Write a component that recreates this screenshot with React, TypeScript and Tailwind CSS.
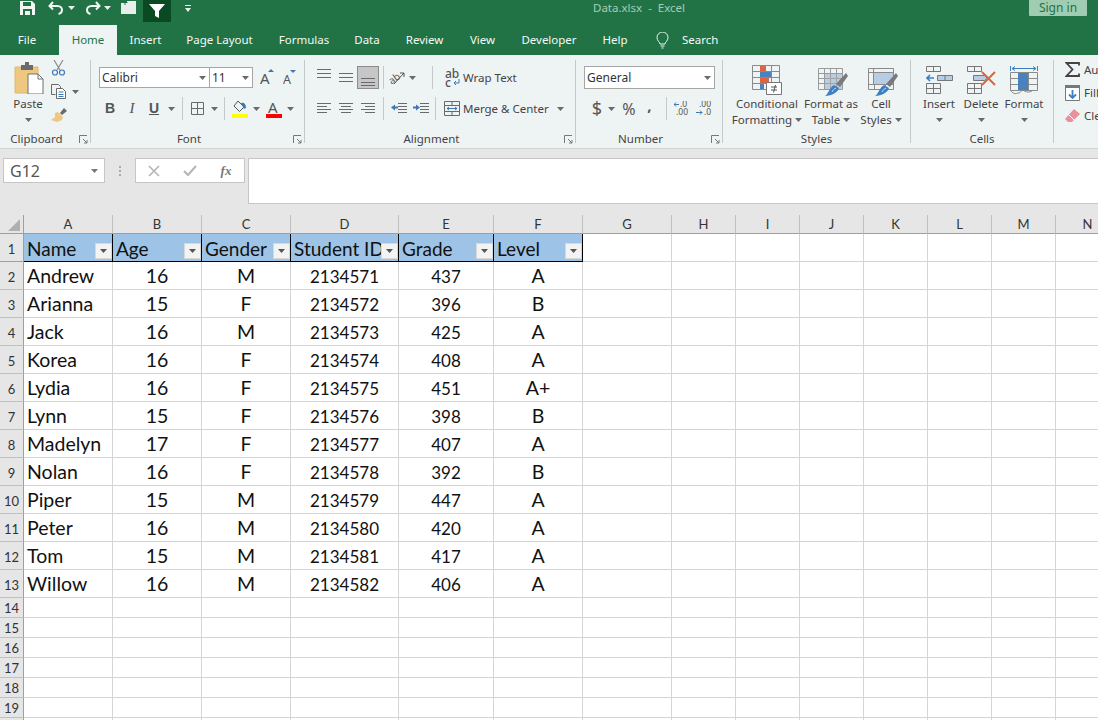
import type { ReactNode } from "react";

const ui = "font-['Noto_Sans',sans-serif]";
const G = "#6a6a6a";

const rows = [
  ["Andrew", "16", "M", "2134571", "437", "A"],
  ["Arianna", "15", "F", "2134572", "396", "B"],
  ["Jack", "16", "M", "2134573", "425", "A"],
  ["Korea", "16", "F", "2134574", "408", "A"],
  ["Lydia", "16", "F", "2134575", "451", "A+"],
  ["Lynn", "15", "F", "2134576", "398", "B"],
  ["Madelyn", "17", "F", "2134577", "407", "A"],
  ["Nolan", "16", "F", "2134578", "392", "B"],
  ["Piper", "15", "M", "2134579", "447", "A"],
  ["Peter", "16", "M", "2134580", "420", "A"],
  ["Tom", "15", "M", "2134581", "417", "A"],
  ["Willow", "16", "M", "2134582", "406", "A"],
];
const headers = ["Name", "Age", "Gender", "Student ID", "Grade", "Level"];
const columns = ["A", "B", "C", "D", "E", "F", "G", "H", "I", "J", "K", "L", "M", "N"];
const gridCols =
  "grid grid-cols-[24px_89px_89px_89px_108px_95px_89px_89px_64px_64px_64px_64px_64px_64px_64px]";

const Caret = ({ color = G }: { color?: string }) => (
  <svg width="7" height="4" viewBox="0 0 7 4" className="shrink-0">
    <path d="M0 0h7L3.500 4z" fill={color} />
  </svg>
);

const Ico = ({ w, h, children }: { w: number; h: number; children: ReactNode }) => (
  <svg width={w} height={h} viewBox={`0 0 ${w} ${h}`} className="shrink-0" fill="none">
    {children}
  </svg>
);

const Lines = ({ ys, xs }: { ys: number[]; xs: [number, number][] }) => (
  <>
    {ys.map((y, i) => (
      <path key={y} d={`M${xs[i % xs.length][0]} ${y + 0.5}H${xs[i % xs.length][1]}`} stroke={G} />
    ))}
  </>
);

const Launcher = () => (
  <div className="w-[11px] shrink-0">
    <svg width="9" height="9" viewBox="0 0 9 9" fill="none">
      <path d="M.5 8V.5H8M4 4l4 4M8 5v3H5" stroke="#777" />
    </svg>
  </div>
);

const Group = ({
  width,
  label,
  launcher,
  children,
}: {
  width: string;
  label: string;
  launcher?: boolean;
  children: ReactNode;
}) => (
  <div className={`${width} h-[83px] shrink-0 flex flex-col border-r border-[#c6c9c9]`}>
    <div className="h-[72px] shrink-0">{children}</div>
    <div className="h-[14px] shrink-0 flex items-center">
      <div className={`flex-1 text-center text-[11.5px] leading-none text-[#444] ${launcher ? "pr-[6px]" : ""}`}>
        {label}
      </div>
      {launcher && <Launcher />}
    </div>
  </div>
);

const Sep = ({ className = "" }: { className?: string }) => (
  <div className={`w-px h-[23px] bg-[#c6c9c9] shrink-0 ${className}`} />
);

const Slot = ({ w, children }: { w: string; children: ReactNode }) => (
  <div className={`${w} h-full shrink-0 flex items-center justify-center`}>{children}</div>
);

const BigButton = ({
  width,
  icon,
  line1,
  line2,
}: {
  width: string;
  icon: ReactNode;
  line1: string;
  line2?: string;
}) => (
  <div className={`${width} shrink-0 flex flex-col items-center`}>
    <div className="h-[36px] mt-[2px] flex items-center justify-center">{icon}</div>
    <div className="text-[11.5px] leading-[16px] mt-[-2px] text-[#444] whitespace-nowrap">{line1}</div>
    {line2 ? (
      <div className="text-[11.5px] leading-[16px] text-[#444] whitespace-nowrap flex items-center gap-[3px]">
        {line2}
        <Caret />
      </div>
    ) : (
      <div className="h-[16px] flex items-center">
        <Caret />
      </div>
    )}
  </div>
);

const TitleBar = () => (
  <div className={`h-[25px] bg-[#217346] flex items-start relative ${ui}`}>
    <div className="w-[20px] shrink-0" />
    <Ico w={15} h={15}>
      <path d="M0 1h12l3 3v11H0z" fill="#f2f7f4" />
      <path d="M3 2h8v4H3z" fill="#217346" />
      <path d="M3 9h9v6H3z" fill="#217346" />
      <path d="M5 11h5v4H5z" fill="#f2f7f4" />
    </Ico>
    <div className="w-[13px] shrink-0" />
    <div className="mt-[1px]">
      <Ico w={16} h={14}>
        <path d="M5 1L1.500 5 5 8.500M2 5h7.500c3 0 4.500 2 4.500 4s-1.500 3.500-3.500 4" stroke="#f2f7f4" strokeWidth="2" />
      </Ico>
    </div>
    <div className="ml-[4px] mt-[6px]"><Caret color="#e8f1ec" /></div>
    <div className="w-[10px] shrink-0" />
    <div className="mt-[1px] -scale-x-100">
      <Ico w={16} h={14}>
        <path d="M5 1L1.500 5 5 8.500M2 5h7.500c3 0 4.500 2 4.500 4s-1.500 3.500-3.500 4" stroke="#f2f7f4" strokeWidth="2" />
      </Ico>
    </div>
    <div className="ml-[3px] mt-[6px]"><Caret color="#e8f1ec" /></div>
    <div className="w-[10px] shrink-0" />
    <Ico w={16} h={14}>
      <path d="M0 3h6V1h9v13H0z" fill="#e8efeb" />
      <path d="M4 0v5M1.500 2.500h5" stroke="#217346" />
    </Ico>
    <div className="w-[6px] shrink-0" />
    <div className="w-[28px] h-[22px] bg-[#0a4a22] flex items-center justify-center shrink-0">
      <Ico w={16} h={16}>
        <path d="M0 1h16l-6 7v7l-4-2V8z" fill="#fff" />
      </Ico>
    </div>
    <div className="w-[14px] shrink-0" />
    <svg width="6" height="7" viewBox="0 0 6 7" className="mt-[5px] shrink-0">
      <path d="M0 0h6v1H0zM0 3h6L3 7z" fill="#e8f1ec" />
    </svg>
    <div className="absolute left-[593px] top-0 text-[11.5px] leading-[16px] text-[#a8cbb7] whitespace-pre">
      Data.xlsx  -  Excel
    </div>
    <div className="absolute left-[1029px] top-0 w-[58px] h-[16px] bg-[#a0cdb2] rounded-b-[1px] text-center text-[12px] leading-[15px] text-[#217346]">
      Sign in
    </div>
  </div>
);

const tabs: [string, string][] = [
  ["Insert", "w-[57px]"],
  ["Page Layout", "w-[91px]"],
  ["Formulas", "w-[78px]"],
  ["Data", "w-[48px]"],
  ["Review", "w-[67px]"],
  ["View", "w-[49px]"],
  ["Developer", "w-[84px]"],
  ["Help", "w-[48px]"],
];

const TabBar = () => (
  <div className={`h-[30px] bg-[#217346] flex text-[11.5px] leading-[30px] text-[#f4f8f6] pl-[4px] ${ui}`}>
    <div className="w-[46px] mr-[9px] text-center">File</div>
    <div className="w-[58px] bg-[#eef3f3] text-[#217346] text-center">Home</div>
    {tabs.map(([t, w]) => (
      <div key={t} className={`${w} text-center whitespace-nowrap`}>
        {t}
      </div>
    ))}
    <div className="ml-[17px] mt-[7px]">
      <Ico w={13} h={17}>
        <path d="M4 12c0-2-3-3-3-6.500a5.500 5.500 0 0 1 11 0C12 9 9 10 9 12zM4.500 14h4M5.500 16h2" stroke="#f4f8f6" />
      </Ico>
    </div>
    <div className="ml-[13px]">Search</div>
  </div>
);

const ClipboardGroup = () => (
  <Group width="w-[91px]" label="Clipboard" launcher>
    <div className="flex">
      <div className="w-[51px] flex flex-col items-center pl-[5px]">
        <div className="mt-[2px] ml-[2px]">
          <Ico w={30} h={32}>
            <path d="M1 5h23v26H1z" fill="#eec780" stroke="#e0b870" />
            <path d="M7 3h4V0h4v3h4v5H7z" fill="#6b6b6b" />
            <path d="M14 12h10l5 5v15H14z" fill="#fff" stroke="#707070" />
            <path d="M24 12v5h5" stroke="#707070" />
          </Ico>
        </div>
        <div className="text-[11.5px] leading-[16px] mt-[2px] text-[#444]">Paste</div>
        <div className="mt-[6px]"><Caret /></div>
      </div>
      <div className="flex flex-col">
        <div className="h-[24px] flex items-start">
          <Ico w={15} h={16}>
            <path d="M3 0l6 10M12 0L6 10" stroke="#8a8a8a" strokeWidth="1.200" />
            <circle cx="4" cy="12.500" r="2.500" stroke="#3c78b4" strokeWidth="1.200" />
            <circle cx="11" cy="12.500" r="2.500" stroke="#3c78b4" strokeWidth="1.200" />
          </Ico>
        </div>
        <div className="h-[24px] flex items-start gap-[6px]">
          <Ico w={15} h={15}>
            <path d="M.5 .5h7l2 2v3M.5 .5v10h4" stroke={G} />
            <path d="M5.500 4.500h6l3 3v7h-9z" fill="#fff" stroke={G} />
            <path d="M7.500 8h5M7.500 10.500h5M7.500 12.500h5" stroke="#3c78b4" />
          </Ico>
          <div className="mt-[6px]"><Caret /></div>
        </div>
        <div className="h-[24px] flex items-start">
          <Ico w={16} h={15}>
            <path d="M9 5l4-5 3 3-5 4z" fill="#6a6a6a" />
            <path d="M4 5l3-1 5 5-1 3-5 2-6-2 4-3z" fill="#eec780" />
          </Ico>
        </div>
      </div>
    </div>
  </Group>
);

const FontGroup = () => (
  <Group width="w-[214px]" label="Font" launcher>
    <div className="pl-[8px] pt-[7px]">
      <div className="h-[21px] flex items-stretch">
        <div className="w-[111px] border border-[#a6a6a6] bg-white flex items-center justify-between pl-[2px] pr-[3px] text-[12px] text-[#333]">
          Calibri
          <Caret />
        </div>
        <div className="w-[43px] border border-l-0 border-[#a6a6a6] bg-white flex items-center justify-between pl-[2px] pr-[3px] text-[12px] text-[#333]">
          11
          <Caret />
        </div>
        <div className="w-[7px]" />
        <Ico w={14} h={21}>
          <text x="0" y="17" fontSize="15" fill="#555" fontFamily="Noto Sans">A</text>
          <path d="M8 5h6l-3-3z" fill="#3c78b4" />
        </Ico>
        <div className="w-[9px]" />
        <Ico w={14} h={21}>
          <text x="0" y="17" fontSize="12.500" fill="#555" fontFamily="Noto Sans">A</text>
          <path d="M7 3h6l-3 3z" fill="#3c78b4" />
        </Ico>
      </div>
      <div className="h-[21px] mt-[10px] flex items-center">
        <Slot w="w-[22px]">
          <span className="font-['Liberation_Sans',sans-serif] font-bold text-[14px] text-[#555]">B</span>
        </Slot>
        <Slot w="w-[22px]">
          <span className="font-['Liberation_Serif',serif] italic text-[15px] text-[#555]">I</span>
        </Slot>
        <Slot w="w-[22px]">
          <span className="font-['Liberation_Sans',sans-serif] font-bold underline text-[14px] text-[#555]">U</span>
        </Slot>
        <Slot w="w-[12px]"><Caret /></Slot>
        <Sep className="ml-[5px]" />
        <div className="w-[8px]" />
        <Ico w={13} h={13}>
          <path d="M.5 .5h12v12H.5zM6.500 .5v12M.5 6.500h12" stroke={G} />
        </Ico>
        <Slot w="w-[20px]"><Caret /></Slot>
        <Sep />
        <div className="w-[7px]" />
        <Ico w={16} h={18}>
          <path d="M6 1l6 6-4.500 4.500-5.500-5.500z" stroke="#555" />
          <path d="M9 3c3-1 5 1 5 5l-2 1z" fill="#3c78b4" />
          <path d="M0 14h16v4H0z" fill="#ffff00" />
        </Ico>
        <Slot w="w-[16px]"><Caret /></Slot>
        <div className="w-[2px]" />
        <Ico w={16} h={18}>
          <text x="2" y="13" fontSize="15" fill="#555" fontFamily="Noto Sans">A</text>
          <path d="M0 14h16v4H0z" fill="#ff0000" />
        </Ico>
        <Slot w="w-[16px]"><Caret /></Slot>
      </div>
    </div>
  </Group>
);

const AlignmentGroup = () => (
  <Group width="w-[271px]" label="Alignment" launcher>
    <div className="pl-[8px] pt-[6px]">
      <div className="h-[23px] flex items-center">
        <Slot w="w-[22px]">
          <Ico w={14} h={23}>
            <Lines ys={[3, 7, 11]} xs={[[0, 14]]} />
          </Ico>
        </Slot>
        <Slot w="w-[22px]">
          <Ico w={14} h={23}>
            <Lines ys={[7, 11, 15]} xs={[[0, 14]]} />
          </Ico>
        </Slot>
        <div className="w-[22px] h-[23px] bg-[#c6c6c6] border border-[#8c8c8c] flex items-center justify-center">
          <Ico w={14} h={21}>
            <Lines ys={[11, 15, 18]} xs={[[0, 14]]} />
          </Ico>
        </div>
        <Sep className="ml-[4px]" />
        <Slot w="w-[24px]">
          <Ico w={17} h={15}>
            <text x="0" y="12" fontSize="10" fill="#555" transform="rotate(-35 6 8)" fontFamily="Noto Sans">ab</text>
            <path d="M6 14L16 3M12 3h4v4" stroke="#555" />
          </Ico>
        </Slot>
        <Slot w="w-[8px]"><Caret /></Slot>
        <div className="w-[16px]" />
        <Sep />
        <div className="w-[12px]" />
        <div className="flex flex-col leading-[9px] text-[12px] font-medium text-[#555] w-[18px]">
          <span>ab</span>
          <span className="flex items-center gap-[2px]">
            c
            <Ico w={7} h={7}>
              <path d="M6 0v4H1M3 2L1 4l2 2" stroke="#3c78b4" />
            </Ico>
          </span>
        </div>
        <span className="text-[11.5px] text-[#444]">Wrap Text</span>
      </div>
      <div className="h-[23px] mt-[8px] flex items-center">
        <Slot w="w-[22px]">
          <Ico w={14} h={13}>
            <Lines ys={[1, 4, 7, 10]} xs={[[0, 14], [0, 10]]} />
          </Ico>
        </Slot>
        <Slot w="w-[22px]">
          <Ico w={14} h={13}>
            <Lines ys={[1, 4, 7, 10]} xs={[[0, 14], [2, 12]]} />
          </Ico>
        </Slot>
        <Slot w="w-[22px]">
          <Ico w={14} h={13}>
            <Lines ys={[1, 4, 7, 10]} xs={[[0, 14], [4, 14]]} />
          </Ico>
        </Slot>
        <Sep className="ml-[4px]" />
        <div className="w-[7px]" />
        <Ico w={16} h={13}>
          <Lines ys={[1, 4, 7, 10]} xs={[[7, 16]]} />
          <path d="M0 5.500l4-3v2h3v2H4v2z" fill="#3c78b4" />
        </Ico>
        <div className="w-[6px]" />
        <Ico w={16} h={13}>
          <Lines ys={[1, 4, 7, 10]} xs={[[7, 16]]} />
          <path d="M7 5.500l-4-3v2H0v2h3v2z" fill="#3c78b4" />
        </Ico>
        <div className="w-[6px]" />
        <Sep />
        <div className="w-[8px]" />
        <Ico w={16} h={15}>
          <path d="M.5 .5h15v14H.5zM.5 4.500h15M.5 10.500h15M8 .5v4M8 10.500v4" stroke={G} />
          <path d="M3 7.500h10M5 6L3 7.500 5 9M11 6l2 1.500L11 9" stroke="#3c78b4" />
        </Ico>
        <span className="text-[11.5px] text-[#444] ml-[3px] whitespace-nowrap">Merge &amp; Center</span>
        <div className="ml-[8px]"><Caret /></div>
      </div>
    </div>
  </Group>
);

const NumberGroup = () => (
  <Group width="w-[147px]" label="Number" launcher>
    <div className="pl-[8px] pt-[6px]">
      <div className="w-[131px] h-[23px] border border-[#a6a6a6] bg-white flex items-center justify-between pl-[2px] pr-[3px] text-[12px] text-[#333]">
        General
        <Caret />
      </div>
      <div className="h-[23px] mt-[8px] flex items-center">
        <div className="w-[3px]" />
        <Slot w="w-[20px]"><span className="text-[18px] text-[#555]">$</span></Slot>
        <Slot w="w-[8px]"><Caret /></Slot>
        <div className="w-[4px]" />
        <Slot w="w-[20px]"><span className="text-[16px] text-[#555]">%</span></Slot>
        <Slot w="w-[21px]"><span className="text-[15px] font-bold text-[#555] -mt-[7px]">,</span></Slot>
        <div className="w-[6px]" />
        <Sep />
        <div className="w-[7px]" />
        <Ico w={16} h={15}>
          <text x="6" y="6" fontSize="8.500" fill="#555" fontFamily="Noto Sans">.0</text>
          <text x="2" y="14" fontSize="8.500" fill="#555" fontFamily="Noto Sans">.00</text>
          <path d="M0 3.500h5M2 1.500l-2 2 2 2" stroke="#3c78b4" />
        </Ico>
        <div className="w-[6px]" />
        <Ico w={16} h={15}>
          <text x="3" y="6" fontSize="8.500" fill="#555" fontFamily="Noto Sans">.00</text>
          <text x="8" y="14" fontSize="8.500" fill="#555" fontFamily="Noto Sans">.0</text>
          <path d="M0 11.500h6M4 9.500l2 2-2 2" stroke="#3c78b4" />
        </Ico>
      </div>
    </div>
  </Group>
);

const CondIcon = () => (
  <Ico w={30} h={30}>
    <path d="M.5 .5h27v24H.5zM.5 6.500h27M.5 12.500h27M.5 18.500h27M8.500 .5v24M19.500 .5v24" stroke="#8a8a8a" />
    <path d="M8 1h6v5H8zM8 13h9v5H8z" fill="#e0633f" />
    <path d="M8 7h11v5H8zM8 19h4v5H8z" fill="#4a82bd" />
    <path d="M14.500 17.500h15v12h-15z" fill="#fff" stroke="#777" />
    <path d="M19 22h6M19 25h6M23.500 20l-2 7.500" stroke="#555" />
  </Ico>
);

const Brush = () => (
  <>
    <path d="M28 5l2 3-8 11-4-3z" fill="#7a7a7a" />
    <path d="M7 28c3-1 4-8 9-11l5 3c-1 4-7 8-14 8z" fill="#3f7fbf" />
    <path d="M14 24c1-2 2-3 4-4" stroke="#cfe0f0" />
  </>
);

const TableIcon = () => (
  <Ico w={30} h={28}>
    <path d="M.5 .5h24v21H.5zM.5 5.500h24M.5 10.500h24M.5 15.500h24M6.500 .5v21M12.500 .5v21M18.500 .5v21" stroke="#9a9a9a" />
    <path d="M7 6h17v15H7z" fill="#b8cde4" />
    <path d="M12.500 6v15M18.500 6v15M7 10.500h17M7 15.500h17" stroke="#a3a3a3" />
    <Brush />
  </Ico>
);

const CellIcon = () => (
  <Ico w={30} h={28}>
    <path d="M.5 .5h25v21H.5zM.5 4.500h25M.5 16.500h25M6.500 16.500v5M17.500 16.500v5M5.500 .5v16" stroke="#8a8a8a" />
    <path d="M6 5h19v11H6z" fill="#b8cde4" />
    <Brush />
  </Ico>
);

const StylesGroup = () => (
  <Group width="w-[188px]" label="Styles">
    <div className="flex pl-[8px]">
      <BigButton width="w-[72px]" icon={<CondIcon />} line1="Conditional" line2="Formatting" />
      <BigButton width="w-[56px]" icon={<div className="pl-[4px] pt-[4px]"><TableIcon /></div>} line1="Format as" line2="Table" />
      <BigButton width="w-[44px]" icon={<div className="pl-[4px] pt-[4px]"><CellIcon /></div>} line1="Cell" line2="Styles" />
    </div>
  </Group>
);

const InsertIcon = () => (
  <Ico w={27} h={28}>
    <path d="M.5 .5h14v5H.5zM7.500 .5v5M.5 17.500h14v10H.5zM7.500 17.500v10M.5 22.500h14" stroke="#777" />
    <path d="M11.500 9.500h15v5h-15zM19 9.500v5" fill="#b8cde4" stroke="#777" />
    <path d="M1 12h7M4 9l-3 3 3 3" stroke="#3f7fbf" strokeWidth="1.600" />
  </Ico>
);

const DeleteIcon = () => (
  <Ico w={30} h={28}>
    <path d="M.5 .5h14v5H.5zM7.500 .5v5M.5 17.500h14v10H.5zM7.500 17.500v10M.5 22.500h14" stroke="#777" />
    <path d="M6.500 9.500h11l3 2.500-3 2.500h-11z" fill="#b8cde4" stroke="#777" />
    <path d="M15 6l13 13M28 6L15 19" stroke="#e0633f" strokeWidth="2" />
  </Ico>
);

const FormatIcon = () => (
  <Ico w={28} h={31}>
    <path d="M.5 1v5M27.500 1v5M2 3.500h24M5 1.500l-3 2 3 2M23 1.500l3 2-3 2" stroke="#3f7fbf" />
    <path d="M.5 7.500h27v18H.5zM.5 13.500h27M.5 19.500h27M8.500 7.500v18M18.500 7.500v18" stroke="#8a8a8a" />
    <path d="M8 8h10v17H8z" fill="#4a82bd" />
    <path d="M1 25c1 4 5 4 7 3 2 0 3-1 4-3M13 25c1 1 3 2 5 2 3 0 4-1 5-2" stroke="#8a8a8a" />
  </Ico>
);

const CellsGroup = () => (
  <Group width="w-[143px]" label="Cells">
    <div className="flex pl-[7px]">
      <BigButton width="w-[42px]" icon={<InsertIcon />} line1="Insert" />
      <BigButton width="w-[42px]" icon={<div className="pl-[2px]"><DeleteIcon /></div>} line1="Delete" />
      <BigButton width="w-[44px]" icon={<FormatIcon />} line1="Format" />
    </div>
  </Group>
);

const EditingGroup = () => (
  <div className="flex flex-col pl-[11px] h-[72px] text-[11.5px] text-[#444] mt-[-2px]">
    <div className="h-[23px] flex items-center gap-[4px]">
      <Ico w={15} h={15}>
        <path d="M14 3.500V1H1.500l6 6.500-6 6.500H14v-2.500" stroke="#444" strokeWidth="1.800" />
      </Ico>
      <span>AutoSum</span>
    </div>
    <div className="h-[23px] flex items-center gap-[4px]">
      <Ico w={15} h={16}>
        <path d="M.5 .5h14v15H.5z" fill="#fff" stroke="#777" />
        <path d="M0 0h15v3H0z" fill="#777" />
        <path d="M7.500 5v8M4 9.500l3.500 3.500L11 9.500" stroke="#3f7fbf" strokeWidth="1.800" />
      </Ico>
      <span>Fill</span>
    </div>
    <div className="h-[23px] flex items-center gap-[4px]">
      <Ico w={15} h={13}>
        <path d="M9 0l6 5-8 8H3L0 10z" fill="#ea8f9b" />
        <path d="M4 6l5 5" stroke="#fff" />
      </Ico>
      <span>Clear</span>
    </div>
  </div>
);

const Ribbon = () => (
  <div className={`h-[94px] bg-[#eef3f3] border-b border-[#d0d3d3] pt-[5px] flex overflow-hidden ${ui}`}>
    <ClipboardGroup />
    <FontGroup />
    <AlignmentGroup />
    <NumberGroup />
    <StylesGroup />
    <CellsGroup />
    <EditingGroup />
  </div>
);

const FormulaBar = () => (
  <div className={`h-[66px] bg-[#e6e6e6] flex items-start pt-[9px] pl-[3px] ${ui}`}>
    <div className="w-[102px] h-[25px] bg-white border border-[#c6c6c6] flex items-center justify-between pl-[6px] pr-[6px] text-[16px] text-[#555]">
      G12
      <Caret color="#777" />
    </div>
    <div className="w-[30px] h-[25px] flex items-center justify-center">
      <svg width="2" height="10" viewBox="0 0 2 10">
        <path d="M0 0h2v2H0zM0 4h2v2H0zM0 8h2v2H0z" fill="#aaa" />
      </svg>
    </div>
    <div className="w-[110px] h-[25px] bg-white border border-[#c6c6c6] flex items-center">
      <Slot w="w-[36px]">
        <Ico w={12} h={12}>
          <path d="M1 1l10 10M11 1L1 11" stroke="#b4b4b4" strokeWidth="1.600" />
        </Ico>
      </Slot>
      <Slot w="w-[36px]">
        <Ico w={14} h={11}>
          <path d="M1 6l4 4 8-9" stroke="#b4b4b4" strokeWidth="2" />
        </Ico>
      </Slot>
      <Slot w="w-[36px]">
        <span className="font-['Liberation_Serif',serif] italic font-bold text-[13px] text-[#777]">fx</span>
      </Slot>
    </div>
    <div className="ml-[3px] flex-1 h-[46px] bg-white border-l border-t border-b border-[#c6c6c6]" />
  </div>
);

const FilterButton = () => (
  <div className="w-[17px] h-[16px] bg-[#f3f3f3] border border-[#d8d8d8] flex items-center justify-center shrink-0 mt-[9px]">
    <Caret color="#555" />
  </div>
);

const cellBase = "font-['Lato',sans-serif] text-[#111]";
const rowNum = "text-center text-[13px] text-[#333] font-['Lato',sans-serif]";

const Sheet = () => (
  <div className="overflow-hidden">
    <div className={`${gridCols} w-[1200px]`}>
      {/* column letters */}
      <div className="h-[19px] bg-[#e6e6e6] border-r border-b border-[#9f9f9f] flex items-end justify-end">
        <svg width="12" height="12" viewBox="0 0 12 12" className="mr-[3px] mb-[2px]">
          <path d="M12 0v12H0z" fill="#b0b0b0" />
        </svg>
      </div>
      {columns.map((c) => (
        <div
          key={c}
          className="h-[19px] bg-[#e6e6e6] border-r border-b border-r-[#c0c0c0] border-b-[#9f9f9f] text-center text-[13px] leading-[19px] text-[#333] font-['Lato',sans-serif]"
        >
          {c}
        </div>
      ))}

      {/* header row */}
      <div className={`h-[28px] bg-[#e6e6e6] border-r border-b border-[#9f9f9f] leading-[30px] ${rowNum}`}>1</div>
      {headers.map((h) => (
        <div
          key={h}
          className={`h-[28px] bg-[#9dc3e6] border-r border-b border-black flex justify-between pl-[3px] overflow-hidden text-[19px] ${cellBase}`}
        >
          <span className="leading-[29px] whitespace-nowrap overflow-hidden">{h}</span>
          <FilterButton />
        </div>
      ))}
      {columns.slice(6).map((c) => (
        <div key={c} className="h-[28px] bg-white border-r border-b border-[#d4d4d4]" />
      ))}

      {/* data rows */}
      {rows.map((row, i) => (
        <div key={row[0]} className="contents">
          <div className={`h-[28px] bg-[#e6e6e6] border-r border-b border-r-[#9f9f9f] border-b-[#c0c0c0] leading-[30px] ${rowNum}`}>
            {i + 2}
          </div>
          {row.map((v, j) => (
            <div
              key={j}
              className={`h-[28px] bg-white border-r border-b border-[#d4d4d4] ${cellBase} ${
                j === 3 || j === 4 ? "text-[17px] leading-[30px]" : "text-[19.5px] leading-[28px]"
              } ${j === 0 ? "pl-[3px]" : "text-center"}`}
            >
              {v}
            </div>
          ))}
          {columns.slice(6).map((c) => (
            <div key={c} className="h-[28px] bg-white border-r border-b border-[#d4d4d4]" />
          ))}
        </div>
      ))}

      {/* empty rows */}
      {[14, 15, 16, 17, 18, 19, 20].map((n) => (
        <div key={n} className="contents">
          <div className={`h-[20px] bg-[#e6e6e6] border-r border-b border-r-[#9f9f9f] border-b-[#c0c0c0] leading-[20px] ${rowNum}`}>
            {n}
          </div>
          {columns.map((c) => (
            <div key={c} className="h-[20px] bg-white border-r border-b border-[#d4d4d4]" />
          ))}
        </div>
      ))}
    </div>
  </div>
);

export default function App() {
  return (
    <div className="w-[1098px] h-[720px] overflow-hidden bg-white">
      <TitleBar />
      <TabBar />
      <Ribbon />
      <FormulaBar />
      <Sheet />
    </div>
  );
}
